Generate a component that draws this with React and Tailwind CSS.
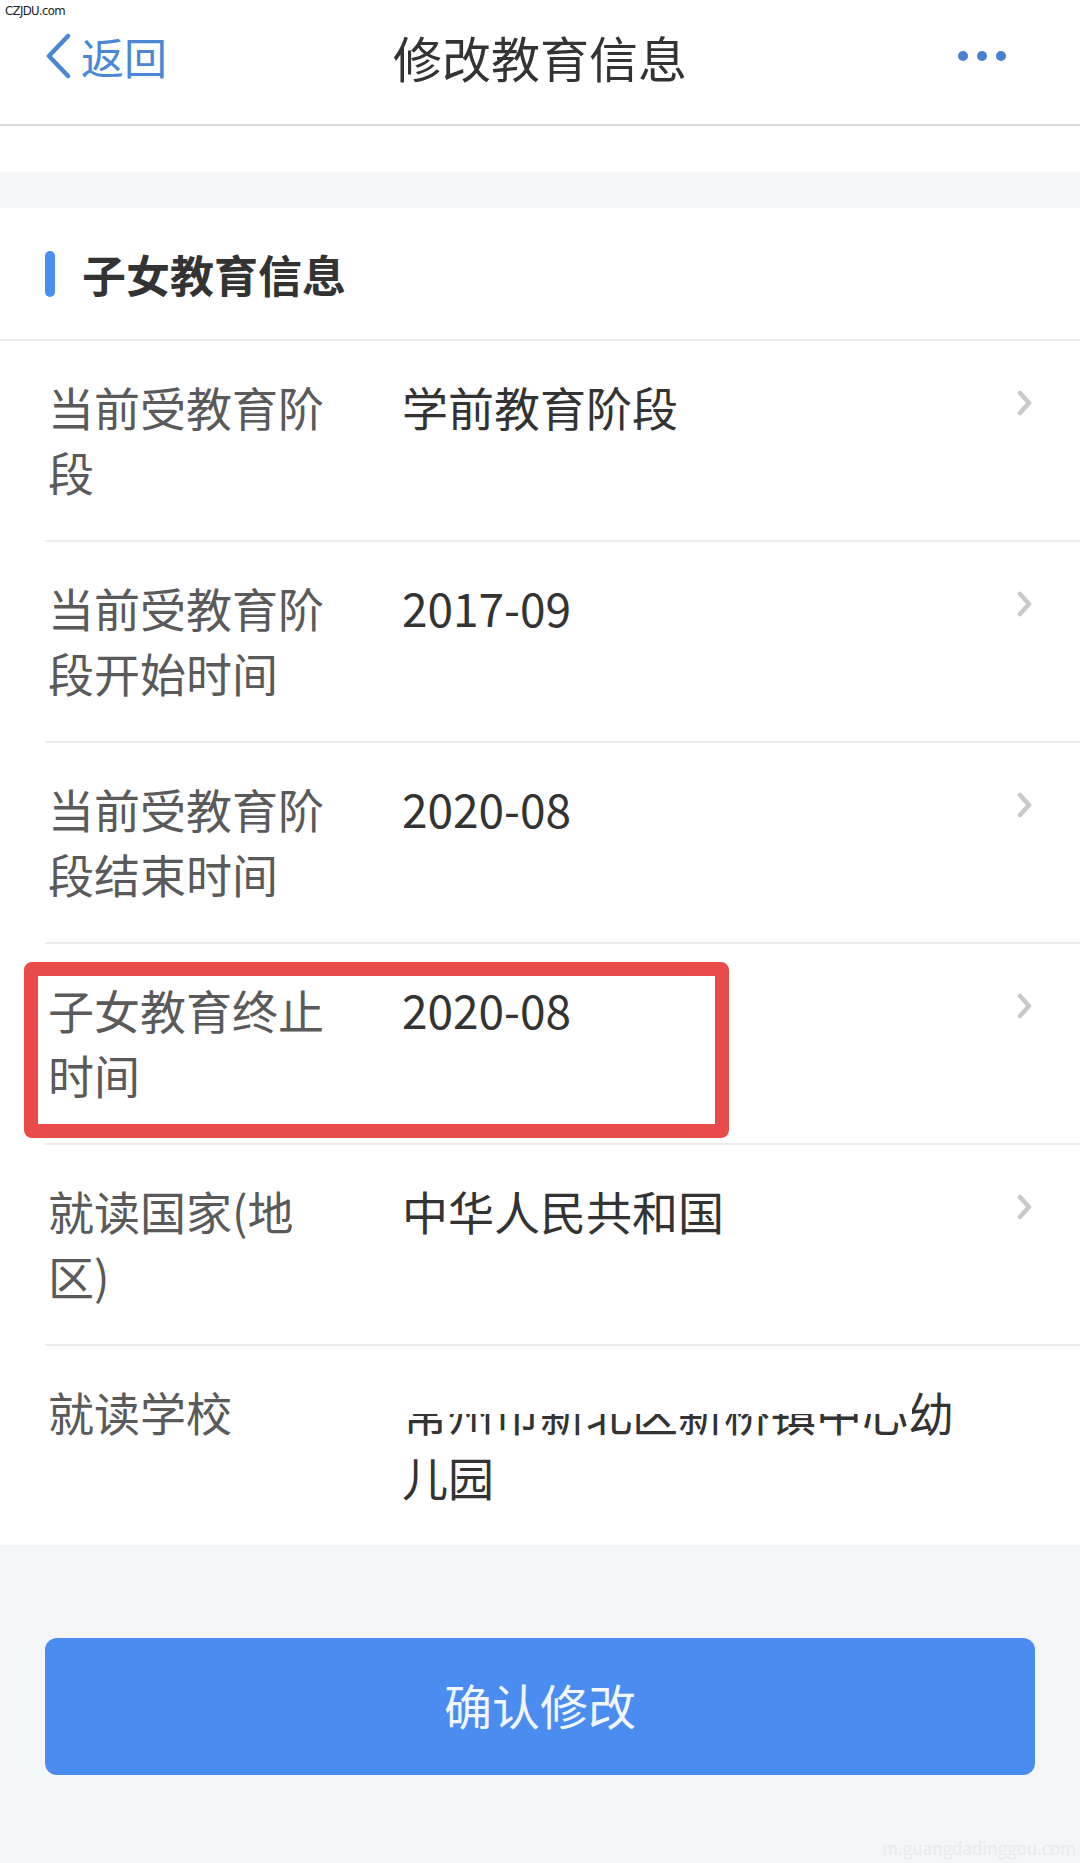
const ROWS = [
  { label: '当前受教育阶段', value: '学前教育阶段' },
  { label: '当前受教育阶段开始时间', value: '2017-09' },
  { label: '当前受教育阶段结束时间', value: '2020-08' },
  { label: '子女教育终止时间', value: '2020-08', marked: true },
  { label: '就读国家(地区)', value: '中华人民共和国' },
];

function Chevron() {
  return (
    <svg width="18" height="26" viewBox="0 0 18 26" fill="none">
      <polyline points="4,3 13,13 4,23" stroke="#c9c9c9" strokeWidth="4.5" strokeLinecap="round" strokeLinejoin="round" />
    </svg>
  );
}

function Row({ label, value, marked, last, children }) {
  return (
    <div className={`relative ml-[45px] flex pl-[3px] pr-[46px] pt-[33px] pb-[36px] ${last ? '' : 'border-b-2 border-[#ececec]'}`}>
      <div className="mr-[69px] w-[285px] shrink-0 text-[46px] leading-[65px] text-[#5a5a5a]">{label}</div>
      <div className="relative w-[575px] text-[46px] leading-[65px] text-[#333333]">{children || value}</div>
      {!last && (
        <div className="ml-auto flex h-[65px] items-center -mt-[4px]">
          <Chevron />
        </div>
      )}
      {marked && (
        <div className="pointer-events-none absolute -left-[21px] top-[18px] h-[176px] w-[705px] rounded-[8px] border-[14px] border-[#e94a4a]" />
      )}
    </div>
  );
}

export default function App() {
  return (
    <div
      className="min-h-[1863px] w-[1080px] bg-[#f4f6f8]"
      style={{ fontFamily: '"Noto Sans CJK SC", "Noto Sans", sans-serif' }}
    >
      {/* header */}
      <div className="relative grid h-[126px] grid-cols-[1fr_auto_1fr] items-center border-b-2 border-[#dedede] bg-white pb-[12px]">
        <span className="absolute left-[5px] top-[4px] text-[13px] leading-none tracking-tighter text-[#222]" style={{ fontFamily: '"Liberation Sans Narrow", "DejaVu Sans Condensed", sans-serif' }}>
          CZJDU.com
        </span>
        <div className="flex items-center pl-[45px]">
          <svg width="27" height="46" viewBox="0 0 27 46" fill="none">
            <polyline points="23,3 4,23 23,43" stroke="#4a88d6" strokeWidth="4.5" strokeLinecap="round" strokeLinejoin="round" />
          </svg>
          <span className="ml-[9px] text-[43px] leading-none text-[#4a88d6]">返回</span>
        </div>
        <div className="text-[49px] leading-none text-[#333333]">修改教育信息</div>
        <div className="flex items-center justify-end gap-[9px] pr-[74px]">
          <span className="h-[10px] w-[10px] rounded-full bg-[#4a7fd4]" />
          <span className="h-[10px] w-[10px] rounded-full bg-[#4a7fd4]" />
          <span className="h-[10px] w-[10px] rounded-full bg-[#4a7fd4]" />
        </div>
      </div>

      <div className="h-[46px] bg-white" />
      <div className="h-[36px]" />

      {/* section */}
      <div className="bg-white">
        <div className="flex h-[133px] items-center border-b-2 border-[#ececec] pl-[45px]">
          <span className="h-[46px] w-[10px] rounded-full bg-[#4a8ef0]" />
          <span className="ml-[27px] text-[44px] font-bold leading-none text-[#333333]">子女教育信息</span>
        </div>

        {ROWS.map(r => (
          <Row key={r.label} {...r} />
        ))}

        <Row label="就读学校" last>
          常州市新北区新桥镇中心幼儿园
          <span className="absolute left-0 top-0 h-[35px] w-[510px] bg-white" />
        </Row>
      </div>

      {/* button */}
      <div className="px-[45px] pt-[93px]">
        <button className="flex h-[137px] w-full items-center justify-center rounded-[12px] bg-[#4a8cef] pb-[6px] text-[48px] text-[#f2f6ff]">
          确认修改
        </button>
      </div>

      <div className="flex justify-end pr-[4px] pt-[60px] text-[17px] text-[#e8ebef]">m.guangdadinggou.com</div>
    </div>
  );
}
